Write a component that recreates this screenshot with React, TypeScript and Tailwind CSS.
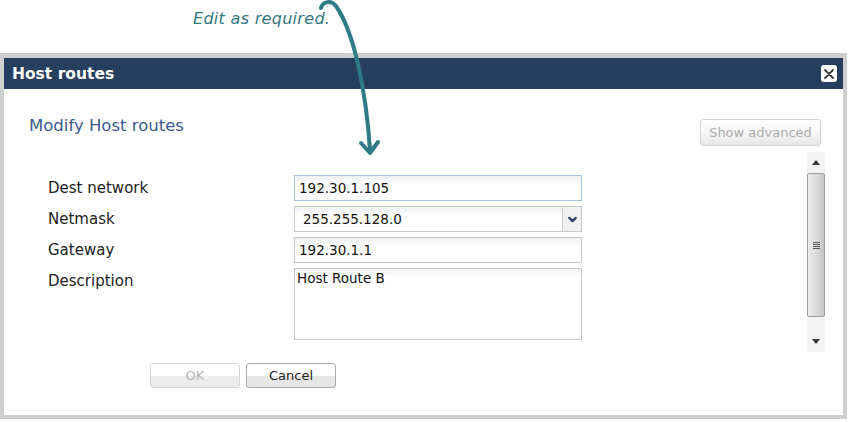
import { ChevronDown } from "lucide-react";

const font = { fontFamily: '"DejaVu Sans", Verdana, sans-serif' };

function Field({ label, children }: { label: string; children: React.ReactNode }) {
  return (
    <>
      <div className="h-[26px] leading-[26px] text-[15px] text-[#222]">{label}</div>
      {children}
    </>
  );
}

const inputCls =
  "h-[26px] w-[288px] border bg-gradient-to-b from-[#eef0f2] to-white to-[35%] pl-[4px] text-[13.5px] leading-[24px] text-[#111]";

export default function App() {
  return (
    <div className="relative h-[422px] w-[850px] overflow-hidden bg-white" style={font}>
      {/* annotation */}
      <div className="h-[53px] pl-[193px] pt-[7px]">
        <span className="text-[16px] italic tracking-[0.3px] text-[#337880]">Edit as required.</span>
      </div>

      {/* dialog */}
      <div className="flex h-[366px] w-[847px] flex-col border-[4px] border-[#cfcfcf] border-t-[5px]">
        <div className="flex h-[31px] items-center justify-between bg-[#263f5e] pl-[8px] pr-[6px]">
          <span className="mt-[3px] text-[15.5px] font-bold text-white">Host routes</span>
          <button className="flex h-[17px] w-[16px] items-center justify-center rounded-[3px] bg-white">
            <svg width="10" height="10" viewBox="0 0 10 10">
              <path d="M1 1 L9 9 M9 1 L1 9" stroke="#3a3a3a" strokeWidth="1.8" strokeLinecap="round" />
            </svg>
          </button>
        </div>

        <div className="flex flex-1 flex-col bg-white">
          <div className="mt-[27px] flex h-[30px] items-start justify-between pl-[25px] pr-[22px]">
            <span className="text-[16.5px] leading-[20px] text-[#3a5b8e]">Modify Host routes</span>
            <button className="mt-[3px] h-[27px] w-[121px] rounded-[3px] border border-[#d2d2d2] bg-gradient-to-b from-white via-[#f6f6f6] to-[#e8e8e8] text-[13px] text-[#ababab]">
              Show advanced
            </button>
          </div>

          <div className="flex flex-1 pl-[44px] pr-[18px]">
            <div className="flex-1 pt-[29px]">
              <div className="grid grid-cols-[246px_288px] gap-y-[5px]">
                <Field label="Dest network">
                  <div className={`${inputCls} border-[#a9c4e0]`}>192.30.1.105</div>
                </Field>
                <Field label="Netmask">
                  <div className={`${inputCls} flex border-[#c9c9c9] pl-0`}>
                    <span className="flex-1 pl-[4px]">255.255.128.0</span>
                    <span className="flex w-[19px] items-center justify-center border-l border-[#cfcfcf] bg-[#f1f1f1]">
                      <ChevronDown size={13} strokeWidth={4} className="text-[#243b63]" />
                    </span>
                  </div>
                </Field>
                <Field label="Gateway">
                  <div className={`${inputCls} border-[#c9c9c9]`}>192.30.1.1</div>
                </Field>
                <Field label="Description">
                  <div className="h-[72px] w-[288px] border border-[#c9c9c9] bg-gradient-to-b from-[#f0f2f4] to-white to-[12%] pl-[2px] text-[13.5px] leading-[18px] text-[#111]">
                    Host Route B
                  </div>
                </Field>
              </div>

              <div className="ml-[102px] mt-[23px] flex gap-[6px]">
                <button className="h-[25px] w-[90px] rounded-[3px] border border-[#d4d4d4] bg-gradient-to-b from-white from-50% to-[#ececec] to-50% text-[13px] text-[#b5b5b5]">
                  OK
                </button>
                <button className="h-[25px] w-[90px] rounded-[3px] border border-[#aaaaaa] bg-gradient-to-b from-white from-50% to-[#e6e6e6] to-50% text-[13px] text-[#222]">
                  Cancel
                </button>
              </div>
            </div>

            {/* scrollbar */}
            <div className="mt-[6px] flex h-[200px] w-[18px] flex-col bg-[#f3f3f3]">
              <div className="flex h-[21px] items-center justify-center">
                <svg width="8" height="5" viewBox="0 0 8 5"><path d="M0 5 L4 0 L8 5 Z" fill="#333" /></svg>
              </div>
              <div className="flex h-[144px] items-center justify-center rounded-[2px] border border-[#9d9d9d] bg-gradient-to-r from-[#ececec] via-[#dcdcdc] to-[#c4c4c4]">
                <svg width="7" height="9" viewBox="0 0 7 9">
                  <path d="M0 1.5 H7 M0 3.5 H7 M0 5.5 H7 M0 7.5 H7" stroke="#555" strokeWidth="1" />
                </svg>
              </div>
              <div className="flex flex-1 items-end justify-center pb-[8px]">
                <svg width="8" height="5" viewBox="0 0 8 5"><path d="M0 0 L4 5 L8 0 Z" fill="#333" /></svg>
              </div>
            </div>
          </div>
        </div>
      </div>

      {/* annotation arrow */}
      <svg className="absolute left-0 top-0" width="850" height="170" viewBox="0 0 850 170">
        <path
          d="M321 8 C323 1 331 0 336 6 C354 32 366 90 370 150"
          fill="none"
          stroke="#2e7a87"
          strokeWidth="4"
          strokeLinecap="round"
        />
        <path d="M361 143 L370 153 L378 142" fill="none" stroke="#2e7a87" strokeWidth="4" strokeLinecap="round" strokeLinejoin="round" />
      </svg>
    </div>
  );
}
